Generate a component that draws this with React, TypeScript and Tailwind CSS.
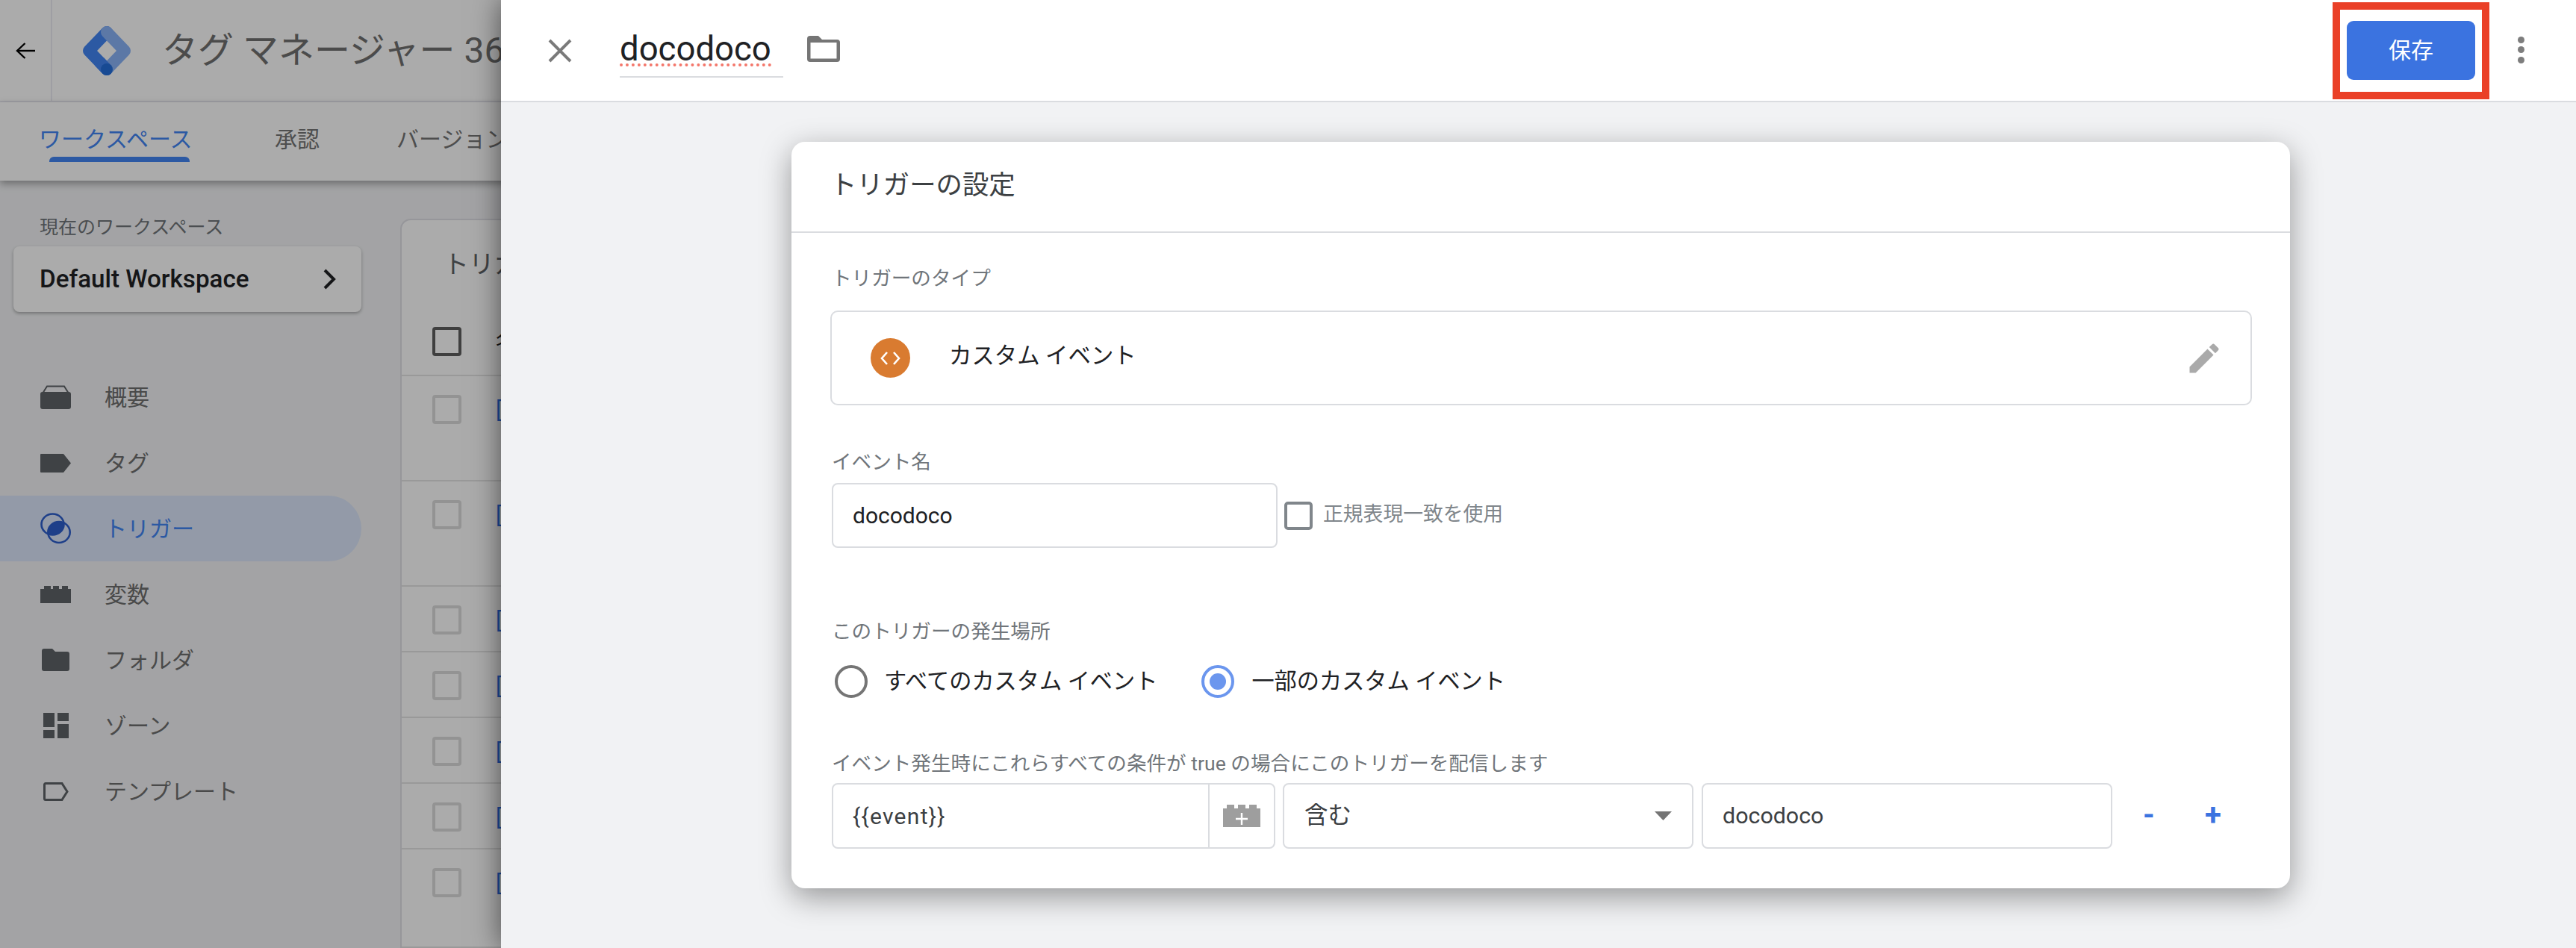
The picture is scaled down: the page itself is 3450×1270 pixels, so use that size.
import React from "react";

const NavIcon = ({ name }: { name: string }) => {
  const c = "#5f6368";
  if (name === "overview")
    return (
      <svg width="41" height="32" viewBox="0 0 41 32">
        <path d="M3 11 L9 1.5 H32 L38 11" fill="none" stroke={c} strokeWidth="2" />
        <rect x="0" y="9" width="41" height="23" rx="3" fill={c} />
      </svg>
    );
  if (name === "tag")
    return (
      <svg width="41" height="25" viewBox="0 0 41 25">
        <path d="M1 0 H31 L41 12.5 L31 25 H1 a1 1 0 0 1 -1 -1 V1 a1 1 0 0 1 1 -1z" fill={c} />
      </svg>
    );
  if (name === "trigger")
    return (
      <svg width="41" height="42" viewBox="0 0 41 42">
        <defs>
          <clipPath id="trigclip">
            <ellipse cx="17" cy="16" rx="15" ry="14" />
          </clipPath>
        </defs>
        <ellipse cx="25" cy="26" rx="15" ry="14" fill="#2d5fcc" clipPath="url(#trigclip)" />
        <ellipse cx="16.5" cy="15.5" rx="15" ry="14" fill="none" stroke="#2d5fcc" strokeWidth="2.6" />
        <ellipse cx="25" cy="26" rx="14.7" ry="14" fill="none" stroke="#2d5fcc" strokeWidth="2.6" />
      </svg>
    );
  if (name === "variable")
    return (
      <svg width="41" height="24" viewBox="0 0 41 24">
        <path d="M0 5 H5 V1 H14 V5 H17 V1 H25 V5 H29 V1 H37 V5 H41 V24 H0z" fill={c} />
      </svg>
    );
  if (name === "folder")
    return (
      <svg width="37" height="30" viewBox="0 0 37 30">
        <path d="M3 0 H14 L18 4 H34 a3 3 0 0 1 3 3 V27 a3 3 0 0 1 -3 3 H3 a3 3 0 0 1 -3 -3 V3 a3 3 0 0 1 3 -3z" fill={c} />
      </svg>
    );
  if (name === "zone")
    return (
      <svg width="34" height="34" viewBox="0 0 34 34">
        <rect x="0" y="0" width="15" height="19" fill={c} />
        <rect x="19" y="0" width="15" height="11" fill={c} />
        <rect x="0" y="23" width="15" height="11" fill={c} />
        <rect x="19" y="15" width="15" height="19" fill={c} />
      </svg>
    );
  return (
    <svg width="34" height="25" viewBox="0 0 34 25">
      <path d="M3 1.5 H25 L32 12.5 L25 23.5 H3 a1.5 1.5 0 0 1 -1.5 -1.5 V3 a1.5 1.5 0 0 1 1.5 -1.5z" fill="none" stroke={c} strokeWidth="3" />
    </svg>
  );
};

const navItems = [
  { name: "overview", label: "概要" },
  { name: "tag", label: "タグ" },
  { name: "trigger", label: "トリガー", active: true },
  { name: "variable", label: "変数" },
  { name: "folder", label: "フォルダ" },
  { name: "zone", label: "ゾーン" },
  { name: "template", label: "テンプレート" },
];

const rows = [141, 141, 88, 88, 88, 88, 132];

const Logo = () => (
  <svg width="64" height="66" viewBox="0 0 64 66" className="shrink-0">
    <path d="M32 8 L8 33 L32 58" fill="none" stroke="#4285f4" strokeWidth="16" strokeLinecap="round" strokeLinejoin="round" />
    <path d="M32 8 L56 33 L32 58" fill="none" stroke="#8ab4f8" strokeWidth="16" strokeLinecap="round" strokeLinejoin="round" />
    <path d="M22 47.5 L32 58" fill="none" stroke="#4285f4" strokeWidth="16" strokeLinecap="butt" />
    <circle cx="32" cy="58" r="8" fill="#246fdb" />
  </svg>
);

const Label = ({ className, children }: { className: string; children: React.ReactNode }) => (
  <div className={`h-8 leading-8 text-[26.6px] text-[#70757a] whitespace-nowrap ${className}`}>{children}</div>
);

export default function App() {
  return (
    <div className="relative w-[3450px] h-[1270px] overflow-hidden bg-[#f3f4f6] font-['Roboto','Noto_Sans_CJK_JP',sans-serif]">
      {/* Page beneath the drawer */}
      <div className="isolate flex flex-col h-full">
        <header className="flex h-[137px] shrink-0 items-center bg-white border-b-2 border-[#ececf4]">
          <div className="flex h-full w-[70px] items-center justify-center border-r-2 border-[#ececf4]">
            <svg width="26" height="22" viewBox="0 0 26 22" fill="none" stroke="#000" strokeWidth="2.4">
              <path d="M2 11 H26" />
              <path d="M12.5 1 L2 11 L12.5 21" />
            </svg>
          </div>
          <div className="ml-[41px]">
            <Logo />
          </div>
          <div className="ml-[42px] text-[48px] text-[#707070] whitespace-nowrap">タグ マネージャー 360</div>
        </header>
        <nav className="relative z-10 flex h-[105px] shrink-0 items-center bg-white pl-[52px] pb-[6px] text-[30px] text-[#757575] shadow-[0_4px_10px_rgba(0,0,0,0.35)]">
          <div className="relative w-[316px] text-[#4285f4]">
            <span>ワークスペース</span>
            <div className="absolute left-[14px] top-[46px] h-[7px] w-[188px] rounded-t-[6px] bg-[#4285f4]" />
          </div>
          <div className="w-[163px]">承認</div>
          <div>バージョン</div>
        </nav>
        <div className="flex flex-1 min-h-0">
          <aside className="w-[536px] shrink-0 pt-[47px]">
            <div className="pl-[53px] h-8 leading-8 text-[25px] text-[#70757a]">現在のワークスペース</div>
            <div className="ml-[18px] mt-[9px] flex h-[88px] w-[466px] items-center justify-between rounded-[8px] bg-white pl-[35px] pr-[34px] shadow-[0_2px_4px_rgba(0,0,0,0.3)]">
              <span className="text-[33.2px] font-medium text-[#202124]">Default Workspace</span>
              <svg width="17" height="28" viewBox="0 0 17 28" fill="none" stroke="#202124" strokeWidth="4">
                <path d="M2 2 L14 14 L2 26" />
              </svg>
            </div>
            <ul className="mt-[70px]">
              {navItems.map((n) => (
                <li
                  key={n.name}
                  className={`flex h-[88px] w-[484px] items-center rounded-r-[44px] ${n.active ? "bg-[#dbe6fb] text-[#4285f4]" : "text-[#6f6f6f]"}`}
                >
                  <div className="flex w-[140px] justify-center pl-[9px]">
                    <NavIcon name={n.name} />
                  </div>
                  <span className="text-[30px]">{n.label}</span>
                </li>
              ))}
            </ul>
          </aside>
          <main className="flex-1 pt-[51px]">
            <div className="h-[1000px] rounded-t-[14px] border-2 border-[#e0e0e6] bg-white">
              <div className="flex h-[118px] items-center pl-[56px] text-[34px] text-[#5f6368]">トリガー</div>
              <div className="flex h-[91px] items-center border-b-2 border-[#e4e4e4] pl-[41px]">
                <div className="h-[39px] w-[39px] rounded-[4px] border-[4px] border-[#5f5f5f]" />
                <span className="ml-[46px] text-[28px] text-[#202124]">名前</span>
              </div>
              {rows.map((h, i) => (
                <div
                  key={i}
                  style={{ height: h }}
                  className="flex items-start border-b-2 border-[#e4e4e4] pl-[41px] pt-[25px]"
                >
                  <div className="h-[39px] w-[39px] rounded-[4px] border-[4px] border-[#dcdcdc]" />
                  <span className="ml-[46px] text-[30px] leading-[39px] text-[#2d6fe8]">[</span>
                </div>
              ))}
            </div>
          </main>
        </div>
      </div>

      {/* Scrim */}
      <div className="absolute inset-0 bg-black/33" />

      {/* Drawer */}
      <section className="absolute inset-y-0 left-[671px] right-0 flex flex-col bg-[#f1f2f4] shadow-[0_0_36px_rgba(0,0,0,0.55)]">
        <div className="flex h-[137px] shrink-0 items-center border-b-2 border-[#dadce0] bg-white pl-[63px]">
          <svg width="32" height="32" viewBox="0 0 32 32" stroke="#7a7a7a" strokeWidth="4" fill="none" className="shrink-0">
            <path d="M2 2 L30 30 M30 2 L2 30" />
          </svg>
          <div className="ml-[64px] h-[57px] w-[219px] self-start mt-[47px] border-b-2 border-[#dadce0]">
            <span className="inline-block h-[42px] border-b-[4px] border-dotted border-[#f4776b] text-[45.5px] leading-[37px] text-[#202124]">
              docodoco
            </span>
          </div>
          <svg width="44" height="35" viewBox="0 0 44 35" className="ml-[32px] shrink-0 -mt-[4px]">
            <path
              fillRule="evenodd"
              fill="#757575"
              d="M4 0 H15 L20 5 H40 a4 4 0 0 1 4 4 V31 a4 4 0 0 1 -4 4 H4 a4 4 0 0 1 -4 -4 V4 a4 4 0 0 1 4 -4z M4.5 9 V30.5 H39.5 V9z"
            />
          </svg>
          <div className="ml-auto flex h-[130px] w-[210px] items-center justify-center border-[10px] border-[#ea4027]">
            <button className="h-[79px] w-[172px] rounded-[9px] bg-[#3b73e0] text-[30px] text-white">保存</button>
          </div>
          <div className="ml-[38px] mr-[69px] flex flex-col gap-[4.5px] pb-[2px]">
            <div className="h-[9px] w-[9px] rounded-full bg-[#7d7d7d]" />
            <div className="h-[9px] w-[9px] rounded-full bg-[#7d7d7d]" />
            <div className="h-[9px] w-[9px] rounded-full bg-[#7d7d7d]" />
          </div>
        </div>

        <div className="flex-1 pt-[53px] pl-[389px]">
          <div className="h-[1000px] w-[2007px] rounded-[18px] bg-white shadow-[0_12px_40px_rgba(0,0,0,0.38)]">
            <div className="flex h-[122px] items-center border-b-2 border-[#dadce0] pl-[52px] pb-[3px] text-[35.4px] text-[#3c4043]">
              トリガーの設定
            </div>
            <div className="pl-[54px] pt-[45px]">
              <Label className="">トリガーのタイプ</Label>
              <div className="-ml-[2px] mt-[27px] flex h-[127px] w-[1904px] items-center rounded-[10px] border-2 border-[#dadce0] pl-[52px] pr-[36px]">
                <div className="flex h-[53px] w-[53px] items-center justify-center rounded-full bg-[#d97b30]">
                  <svg width="27" height="20" viewBox="0 0 27 20" fill="none" stroke="#fff" strokeWidth="2.6">
                    <path d="M9 2 L2 10 L9 18 M18 2 L25 10 L18 18" />
                  </svg>
                </div>
                <span className="ml-[52px] -mt-[6px] text-[30.4px] text-[#202124]">カスタム イベント</span>
                <svg width="52" height="52" viewBox="0 0 24 24" fill="#aaaaaa" className="ml-auto">
                  <path d="M3 17.25V21h3.75L17.81 9.94l-3.75-3.75L3 17.25zM20.71 7.04c.39-.39.39-1.02 0-1.41l-2.34-2.34c-.39-.39-1.02-.39-1.41 0l-1.83 1.83 3.75 3.75 1.83-1.83z" />
                </svg>
              </div>

              <Label className="mt-[60px]">イベント名</Label>
              <div className="mt-[12px] flex items-center">
                <div className="flex h-[87px] w-[597px] items-center rounded-[8px] border-2 border-[#dadce0] pl-[26px] text-[30px] text-[#202124]">
                  docodoco
                </div>
                <div className="ml-[9px] h-[38px] w-[38px] rounded-[5px] border-[4px] border-[#80868b]" />
                <span className="ml-[14px] -mt-[2px] text-[26.8px] text-[#80868b]">正規表現一致を使用</span>
              </div>

              <Label className="mt-[96px]">このトリガーの発生場所</Label>
              <div className="mt-[29px] flex h-[44px] items-center pl-[4px]">
                <div className="h-[44px] w-[44px] rounded-full border-[4px] border-[#757575]" />
                <span className="ml-[22px] text-[30.2px] text-[#202124]">すべてのカスタム イベント</span>
                <div className="ml-[59px] flex h-[44px] w-[44px] items-center justify-center rounded-full border-[4px] border-[#6b96ee]">
                  <div className="h-[22px] w-[22px] rounded-full bg-[#6b96ee]" />
                </div>
                <span className="ml-[23px] text-[30.2px] text-[#202124]">一部のカスタム イベント</span>
              </div>

              <Label className="mt-[72px]">イベント発生時にこれらすべての条件が true の場合にこのトリガーを配信します</Label>
              <div className="mt-[10px] flex items-stretch h-[88px]">
                <div className="flex w-[594px] items-center rounded-[8px] border-2 border-[#dadce0]">
                  <span className="flex-1 pl-[26px] text-[30px] tracking-[1.3px] text-[#3c4043]">{"{{event}}"}</span>
                  <div className="flex h-full w-[88px] items-center justify-center border-l-2 border-[#dadce0]">
                    <svg width="50" height="30" viewBox="0 0 50 30">
                      <path d="M0 5 H5 V0 H15 V5 H20 V0 H30 V5 H35 V0 H45 V5 H50 V30 H0z" fill="#9e9e9e" />
                      <path d="M25 11 V27 M17 19 H33" stroke="#fff" strokeWidth="2.4" />
                    </svg>
                  </div>
                </div>
                <div className="ml-[10px] flex w-[550px] items-center justify-between rounded-[8px] border-2 border-[#dadce0] pl-[28px] pr-[27px]">
                  <span className="text-[31.5px] -ml-[1px] text-[#3c4043]">含む</span>
                  <svg width="23" height="12" viewBox="0 0 23 12">
                    <path d="M0 0 H23 L11.5 12z" fill="#757575" />
                  </svg>
                </div>
                <div className="ml-[11px] flex w-[550px] items-center rounded-[8px] border-2 border-[#dadce0] pl-[26px] text-[30.4px] text-[#3c4043]">
                  docodoco
                </div>
                <button className="ml-[41px] -mt-[2px] w-[16px] text-[40px] font-bold leading-none text-[#3b73e0]">-</button>
                <button className="ml-[66px] -mt-[2px] w-[24px] text-[40px] font-bold leading-none text-[#3b73e0]">+</button>
              </div>
            </div>
          </div>
        </div>
      </section>
    </div>
  );
}
